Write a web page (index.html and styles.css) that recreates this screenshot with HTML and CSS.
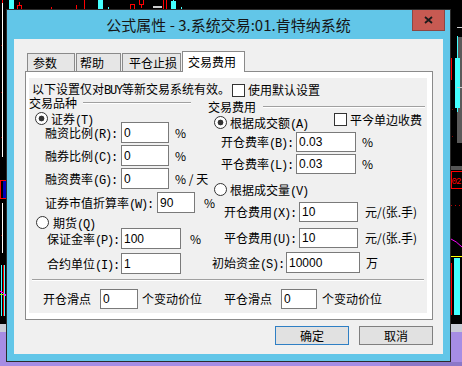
FILE: index.html
```html
<!DOCTYPE html>
<html lang="zh-CN">
<head>
    <meta charset="UTF-8">
    <title>公式属性</title>
    <link rel="stylesheet" href="styles.css">
</head>
<body>
    <!-- chart behind the dialog -->
    <svg class="chart" width="462" height="366" viewBox="0 0 462 366" shape-rendering="crispEdges">
        <rect width="462" height="366" fill="#000"/>
        <g fill="#800000">
            <rect x="1" y="45" width="1" height="1"/>
            <rect x="1" y="92" width="1" height="1"/>
            <rect x="1" y="137" width="1" height="1"/>
            <rect x="1" y="235" width="1" height="1"/>
            <rect x="452" y="136" width="1" height="1"/>
            <rect x="452" y="109" width="1" height="1"/>
        </g>
        <rect x="0" y="324" width="462" height="8" fill="#c9ccd6"/>
        <rect x="0" y="332" width="462" height="34" fill="#a68de4"/>
        <rect x="390" y="362" width="72" height="4" fill="#8c78c8"/>

        <!-- left edge -->
        <rect x="2" y="0" width="1" height="157" fill="#fff"/>
        <rect x="2" y="0" width="1" height="3" fill="#f00"/>
        <rect x="0" y="180" width="7" height="1" fill="#f00"/>
        <rect x="0" y="198" width="7" height="1" fill="#f00"/>
        <rect x="0" y="181" width="1" height="17" fill="#f00"/>
        <rect x="3" y="181" width="4" height="17" fill="#0000b8"/>
        <rect x="2" y="203" width="1" height="50" fill="#fff"/>
        <rect x="1" y="265" width="1" height="51" fill="#44ffff"/>
        <rect x="4" y="265" width="1" height="51" fill="#44ffff"/>
        <rect x="3" y="265" width="1" height="51" fill="#f00"/>
        <rect x="0" y="294" width="7" height="1" fill="#99ee00"/>
        <path d="M0 291 L7 296" stroke="#f0f" fill="none"/>

        <!-- top edge -->
        <rect x="9" y="0" width="5" height="9" fill="#44ffff"/>
        <rect x="17.5" y="5.5" width="4" height="4" fill="none" stroke="#f00"/>
        <rect x="19" y="2" width="1" height="3" fill="#f00"/>
        <rect x="51" y="7" width="1" height="2" fill="#f00"/>
        <rect x="76" y="5" width="1" height="4" fill="#f00"/>
        <rect x="84" y="0" width="1" height="9" fill="#f00"/>
        <rect x="98" y="0" width="5" height="9" fill="#44ffff"/>
        <rect x="108" y="7" width="1" height="2" fill="#44ffff"/>
        <rect x="130.5" y="4.5" width="4" height="5" fill="none" stroke="#f00"/>
        <path d="M139.5 0 V4.5 H143.5 V0 M141.5 4.5 V8" stroke="#f00" fill="none"/>
        <rect x="153" y="6" width="9" height="2" fill="#cccccc"/>
        <rect x="163" y="0" width="1" height="9" fill="#f00"/>
        <rect x="166" y="0" width="1" height="9" fill="#f00"/>
        <rect x="171" y="1" width="5" height="8" fill="#44ffff"/>
        <rect x="173" y="0" width="1" height="1" fill="#44ffff"/>
        <rect x="181" y="7" width="1" height="2" fill="#44ffff"/>

        <!-- right edge -->
        <rect x="457" y="27" width="5" height="1" fill="#cccccc"/>
        <rect x="457" y="37" width="5" height="106" fill="#5a5a5a"/>
        <rect x="457" y="36" width="1" height="76" fill="#44ffff"/>
        <rect x="455" y="58" width="5" height="50" fill="#44ffff"/>
        <rect x="457" y="87" width="5" height="1" fill="#cccccc"/>
        <rect x="451" y="58" width="1" height="22" fill="#f00"/>
        <rect x="451" y="166" width="11" height="4" fill="#555"/>
        <rect x="451.5" y="171.5" width="12" height="17" fill="none" stroke="#f00"/>
        <text x="451.5" y="184" fill="#f00" font-size="9" font-family="Liberation Mono" textLength="10">02</text>
        <path d="M451 205.5 H462" stroke="#c00000" stroke-dasharray="1 3" fill="none"/>
        <path d="M451 239 Q456 241 462 247" stroke="#f0f" fill="none" shape-rendering="auto"/>
        <rect x="451" y="256" width="11" height="1" fill="#ffff00"/>
        <rect x="454" y="258" width="6" height="57" fill="#44ffff"/>
        <rect x="451" y="263" width="1" height="52" fill="#f00"/>
    </svg>

    <div class="window">
        <div class="titlebar">
            公式属性 - 3.系统交易:01.肯特纳系统
            <div class="close">
                <svg width="9" height="8" viewBox="0 0 9 8"><path d="M1 1 L8 7 M8 1 L1 7" stroke="#1a1a1a" stroke-width="1.8"/></svg>
            </div>
        </div>

        <div class="client">
            <div class="tabs">
                <div class="tab t1">参数</div>
                <div class="tab t2">帮助</div>
                <div class="tab t3">平仓止损</div>
                <div class="tab active">交易费用</div>
            </div>

            <div class="panel">
                <div class="page">
                    <div class="notice">
                        <span class="ntext">以下设置仅对<span class="k">BUY</span>等新交易系统有效。</span><span class="check"></span><span>使用默认设置</span>
                    </div>

                    <div class="groups">
                        <!-- 交易品种 -->
                        <div class="col">
                            <div class="gtitle gl"><span>交易品种</span><span class="etch"></span></div>
                            <div class="opt h10"><span class="radio on"></span><span class="otext">证券<span class="k">(T)</span></span></div>
                            <div class="row h23"><span class="lbl la">融资比例<span class="k">(R):</span></span><input class="field w48" value="0"><span class="unit u6">%</span></div>
                            <div class="row h23"><span class="lbl la">融券比例<span class="k">(C):</span></span><input class="field w48" value="0"><span class="unit u6">%</span></div>
                            <div class="row h24"><span class="lbl la">融资费率<span class="k">(G):</span></span><input class="field w48" value="0"><span class="unit u6">% / 天</span></div>
                            <div class="row h24"><span class="lbl lb">证券市值折算率<span class="k">(W):</span></span><input class="field w38" value="90"><span class="unit u9">%</span></div>
                            <div class="opt h12 futures"><span class="radio"></span><span class="otext">期货<span class="k">(Q)</span></span></div>
                            <div class="row h25"><span class="lbl lc">保证金率<span class="k">(P):</span></span><input class="field w60" value="100"><span class="unit u9">%</span></div>
                            <div class="row h21"><span class="lbl lc">合约单位<span class="k">(I):</span></span><input class="field w60" value="1"></div>
                        </div>

                        <!-- 交易费用 -->
                        <div class="col">
                            <div class="gtitle gr"><span>交易费用</span><span class="etch"></span></div>
                            <div class="opt h19">
                                <span class="choice"><span class="radio on"></span><span class="otext">根据成交额<span class="k">(A)</span></span></span>
                                <span class="check"></span><span class="ctext">平今单边收费</span>
                            </div>
                            <div class="row h22 thin"><span class="lbl ld">开仓费率<span class="k">(B):</span></span><input class="field w60" value="0.03"><span class="unit u6">%</span></div>
                            <div class="row h29 thin"><span class="lbl ld">平仓费率<span class="k">(L):</span></span><input class="field w60" value="0.03"><span class="unit u6">%</span></div>
                            <div class="opt h19 by-vol"><span class="radio"></span><span class="otext">根据成交量<span class="k">(V)</span></span></div>
                            <div class="row h26 thin"><span class="lbl le">开仓费用<span class="k">(X):</span></span><input class="field w59" value="10"><span class="unit u7">元/(张.手)</span></div>
                            <div class="row h24 thin"><span class="lbl le">平仓费用<span class="k">(U):</span></span><input class="field w59" value="10"><span class="unit u7">元/(张.手)</span></div>
                            <div class="row h21"><span class="lbl lf">初始资金<span class="k">(S):</span></span><input class="field w74" value="10000"><span class="unit u6">万</span></div>
                        </div>
                    </div>

                    <div class="sep"></div>

                    <div class="slips">
                        <div class="slip first"><span class="slbl">开仓滑点</span><input class="field w38" value="0"><span class="unit u4">个变动价位</span></div>
                        <div class="slip"><span class="slbl">平仓滑点</span><input class="field w36" value="0"><span class="unit u5">个变动价位</span></div>
                    </div>
                </div>
            </div>

            <div class="buttons">
                <button class="btn default">确定</button>
                <button class="btn">取消</button>
            </div>
        </div>
    </div>
</body>
</html>
```

FILE: styles.css
```css
body {
    margin: 0;
    width: 462px;
    height: 366px;
    overflow: hidden;
    background: #000;
    font-family: "Noto Sans CJK SC", sans-serif;
    font-size: 12px;
    color: #000;
}
.chart {
    position: absolute;
    left: 0;
    top: 0;
}
.window {
    position: absolute;
    left: 6px;
    top: 9px;
    width: 445px;
    height: 353px;
    box-sizing: border-box;
    border: 1px solid #2b2b2b;
    background: #62c6e8;
}
.titlebar {
    height: 29px;
    line-height: 29px;
    text-align: center;
    font-size: 15px;
    color: #161616;
    position: relative;
}
.close {
    position: absolute;
    right: 5px;
    top: 0;
    width: 33px;
    height: 21px;
    box-sizing: border-box;
    border: 1px solid #8e4642;
    border-top: none;
    background: #c75a52;
    display: flex;
    justify-content: center;
    align-items: center;
}
.close svg {
    display: block;
}
.client {
    margin: 0 7px;
    height: 315px;
    background: #f0f0f0;
    overflow: hidden;
}

/* tabs */
.tabs {
    display: flex;
    align-items: flex-end;
    height: 20px;
    padding-top: 12px;
    padding-left: 13px;
}
.tab {
    box-sizing: border-box;
    height: 18px;
    line-height: 17px;
    padding-left: 5px;
    margin-right: 1px;
    border: 1px solid #8a8a8a;
    border-bottom: none;
    background: #e6e6e6;
    white-space: nowrap;
}
.t1 { width: 48px; }
.t2 { width: 45px; padding-left: 3px; }
.t3 { width: 59px; padding-left: 6px; }
.tab.active {
    width: 63px;
    height: 21px;
    line-height: 19px;
    margin-bottom: -1px;
    background: #fff;
    position: relative;
    z-index: 1;
}
.panel {
    margin-left: 11px;
    width: 408px;
    height: 249px;
    box-sizing: border-box;
    border: 1px solid #8a8a8a;
    background: #fff;
    padding: 6px 5px 6px 3px;
}
.page {
    height: 235px;
    background: #f0f0f0;
}

.k {
    font-family: "Liberation Mono", monospace;
    font-size: 12px;
    letter-spacing: -1.2px;
}
.notice {
    display: flex;
    align-items: center;
    height: 14px;
    padding-top: 5px;
    padding-left: 3px;
    line-height: 14px;
    white-space: nowrap;
}
.check {
    flex: none;
    width: 13px;
    height: 13px;
    box-sizing: border-box;
    border: 1px solid #333;
    background: #fff;
    margin-left: 2px;
    margin-right: 3px;
}
.radio {
    flex: none;
    width: 13px;
    height: 13px;
    box-sizing: border-box;
    border: 1px solid #333;
    border-radius: 50%;
    background: #fff;
}
.radio.on {
    background: radial-gradient(circle, #333 0 2.6px, #fff 3.2px);
}

.groups {
    display: grid;
    grid-template-columns: 178px 1fr;
}
.gtitle {
    display: flex;
    align-items: flex-start;
    line-height: 12px;
    white-space: nowrap;
}
.etch {
    height: 0;
    border-top: 1px solid #a0a0a0;
    border-bottom: 1px solid #fff;
    margin-top: 5px;
}
.gl { height: 15px; }
.gl .etch { width: 108px; margin-left: 6px; }
.gr { height: 12px; padding-top: 4px; padding-left: 1px; }
.gr .etch { flex: 1; margin-left: 7px; margin-right: 2px; }

.opt {
    display: flex;
    align-items: flex-start;
    white-space: nowrap;
}
.opt .radio { margin-left: 6px; }
.otext {
    line-height: 13px;
    margin-left: 3px;
}
.futures .radio { margin-left: 7px; }
.futures .otext { margin-left: 4px; }
.choice {
    display: flex;
    width: 118px;
    margin-left: 7px;
    padding-top: 3px;
}
.choice .radio { margin-left: 0; }
.ctext { line-height: 13px; }
.by-vol .radio { margin-left: 7px; }

.row {
    display: flex;
    align-items: flex-start;
    white-space: nowrap;
}
.row .lbl,
.row .unit {
    line-height: 13px;
    margin-top: 4px;
}
.row.thin .lbl,
.row.thin .unit {
    line-height: 14px;
    margin-top: 3px;
}
.h10 { height: 10px; }
.h12 { height: 12px; }
.h19 { height: 19px; }
.h21 { height: 21px; }
.h22 { height: 22px; }
.h23 { height: 23px; }
.h24 { height: 24px; }
.h25 { height: 25px; }
.h26 { height: 26px; }
.h29 { height: 29px; }

.lbl { flex: none; }
.la { margin-left: 16px; width: 76px; }
.lb { margin-left: 16px; width: 112px; }
.lc { margin-left: 18px; width: 74px; }
.ld { margin-left: 14px; width: 75px; }
.le { margin-left: 17px; width: 75px; }
.lf { margin-left: 5px; width: 74px; }

.field {
    flex: none;
    box-sizing: border-box;
    height: 21px;
    margin: 0;
    padding: 0 2px;
    border: 1px solid #7a7a7a;
    background: #fff;
    font-family: "Liberation Sans", sans-serif;
    font-size: 12px;
    color: #000;
    outline: none;
}
.thin .field { height: 20px; }
.w36 { width: 36px; }
.w38 { width: 38px; }
.w48 { width: 48px; }
.w59 { width: 59px; }
.w60 { width: 60px; }
.w74 { width: 74px; }

.u4 { margin-left: 4px; }
.u5 { margin-left: 5px; }
.u6 { margin-left: 6px; }
.u7 { margin-left: 7px; }
.u9 { margin-left: 9px; }

.sep {
    margin: 5px 0 0 3px;
    width: 392px;
    border-top: 1px solid #a0a0a0;
    border-bottom: 1px solid #fff;
}
.slips {
    display: flex;
    margin-top: 8px;
    height: 20px;
    line-height: 20px;
    white-space: nowrap;
}
.slip {
    display: flex;
}
.slip.first {
    width: 181px;
    padding-left: 14px;
}
.slbl {
    width: 57px;
}
.slip .field { height: 20px; }

.buttons {
    display: flex;
    justify-content: flex-end;
    gap: 10px;
    margin-top: 6px;
    padding-right: 10px;
}
.btn {
    width: 74px;
    height: 19px;
    box-sizing: border-box;
    margin: 0;
    padding: 0;
    border: 1px solid #7f7f7f;
    background: #e1e1e1;
    font-family: "Noto Sans CJK SC", sans-serif;
    font-size: 12px;
    line-height: 17px;
    color: #000;
}
.btn.default {
    border-color: #2f7fc4;
}
```
